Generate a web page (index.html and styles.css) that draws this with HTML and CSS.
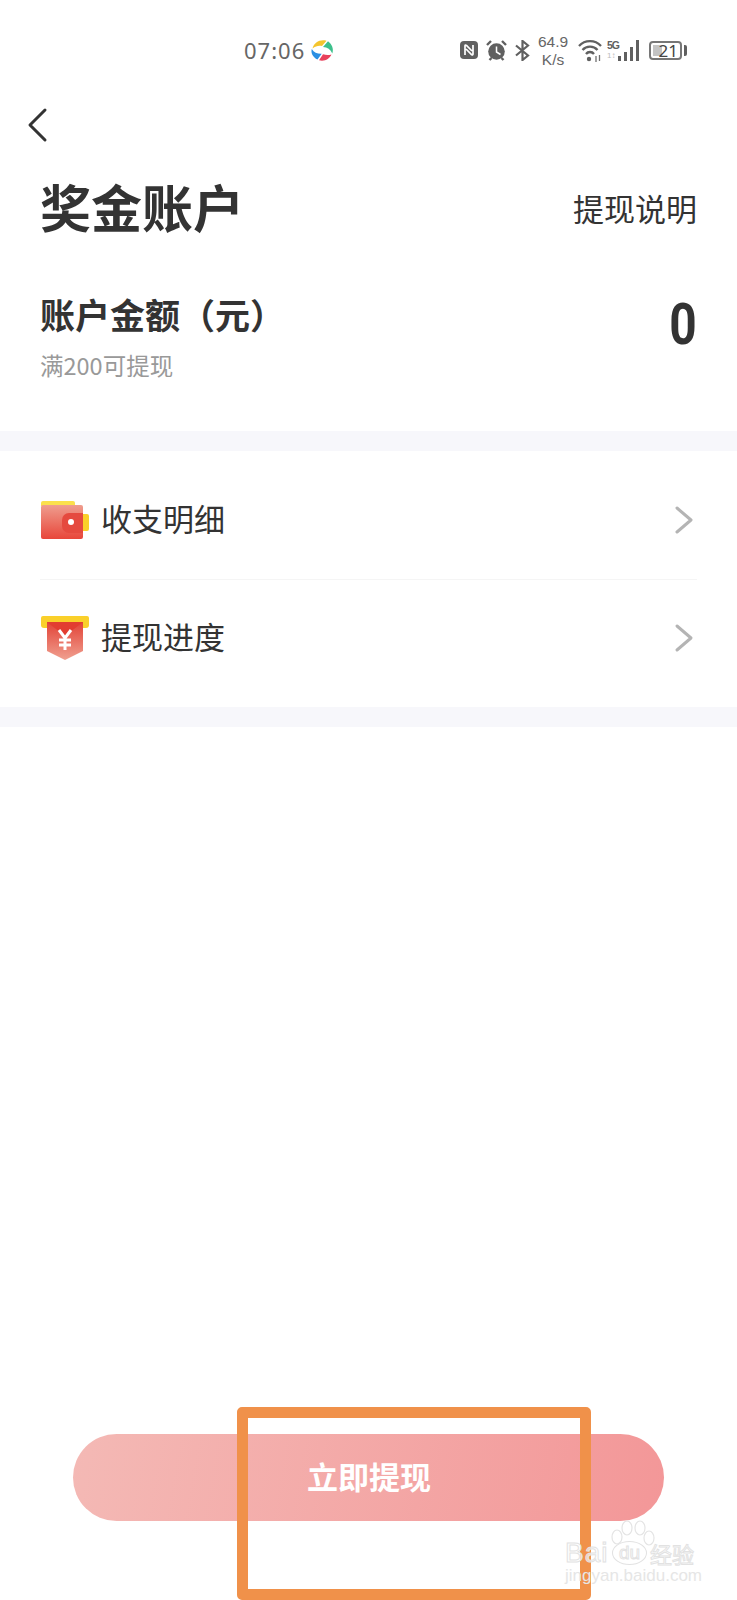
FILE: index.html
```html
<!DOCTYPE html>
<html lang="zh-CN">
<head>
    <meta charset="UTF-8">
    <title>奖金账户</title>
    <link rel="stylesheet" href="styles.css">
</head>
<body>
<div class="page">
    <div class="status">
        <div class="status-left">
            <span class="time">07:06</span>
            <svg class="app-dot" width="24" height="24" viewBox="0 0 24 24">
                <path d="M2.500 10.500C4 4.500 10 1 16.500 2.800L12 8C8.500 7.200 5.500 8.300 2.500 10.500Z" fill="#f4c52e"/>
                <path d="M18 3.200C22 6 24 11 22.300 15.500C20.500 11.500 17.500 9.300 13 9Z" fill="#3dc08c"/>
                <path d="M21.500 16.500C19.500 21 14.500 23.800 9 22.300L13 16.300C16 17.200 18.500 17.300 21.500 16.500Z" fill="#e8415c"/>
                <path d="M7.500 21.500C3 19.500 .5 15 1.800 11C4 14.500 7.500 16 11.700 15.800Z" fill="#2b8fe3"/>
            </svg>
        </div>
        <div class="status-right">
            <svg class="s-nfc" width="18" height="18" viewBox="0 0 18 18">
                <rect width="18" height="18" rx="4" fill="#606060"/>
                <path d="M5 14V5q0-1.500 1.500-.5L12 10M13 4v9q0 1.500-1.500.5L6 8" fill="none" stroke="#fff" stroke-width="1.700"/>
            </svg>
            <svg class="s-alarm" width="21" height="21" viewBox="0 0 21 21">
                <circle cx="10.500" cy="11.500" r="8.300" fill="#606060"/>
                <path d="M1 5l4-4M20 5l-4-4M3.500 20l2-2M17.500 20l-2-2" stroke="#606060" stroke-width="2.400"/>
                <path d="M10.500 6.500v5.500l4 2.500" fill="none" stroke="#fff" stroke-width="1.500"/>
            </svg>
            <svg class="s-bt" width="15" height="21" viewBox="0 0 15 21">
                <path d="M1 5.500l12 10-5.500 4.500V1l5.500 4.500-12 10" fill="none" stroke="#606060" stroke-width="2.200"/>
            </svg>
            <div class="speed">64.9<br>K/s</div>
            <svg class="s-wifi" width="24" height="23" viewBox="0 0 24 23">
                <path d="M1 7a15 15 0 0 1 22 0M4.500 11a10 10 0 0 1 15 0M8 15a5 5 0 0 1 8 0" fill="none" stroke="#606060" stroke-width="2.300"/>
                <circle cx="11" cy="20" r="2.200" fill="#606060"/>
                <path d="M18 17v6M21.500 16v6" stroke="#707070" stroke-width="1.300"/>
            </svg>
            <div class="net"><b>5G</b><i>1↕</i></div>
            <div class="bars"><span class="b1"></span><span class="b2"></span><span class="b3"></span><span class="b4"></span></div>
            <div class="battery">
                <div class="battery-body"><div class="battery-fill"></div><span>21</span></div>
                <div class="battery-cap"></div>
            </div>
        </div>
    </div>

    <div class="nav">
        <svg width="24" height="36" viewBox="0 0 24 36">
            <path d="M19 3L4 18l15 15" fill="none" stroke="#333" stroke-width="3" stroke-linecap="round" stroke-linejoin="round"/>
        </svg>
    </div>

    <div class="head">
        <h1>奖金账户</h1>
        <span class="explain">提现说明</span>
    </div>

    <div class="account">
        <div>
            <div class="account-title">账户金额（元）</div>
            <div class="account-note">满200可提现</div>
        </div>
        <div class="amount">0</div>
    </div>

    <div class="band"></div>

    <div class="menu">
        <div class="menu-row row-first">
            <svg class="menu-icon" width="48" height="38" viewBox="0 0 48 38">
                <defs>
                    <linearGradient id="redA" x1="0" y1="0" x2="0" y2="1">
                        <stop offset="0" stop-color="#ef9d8e"/>
                        <stop offset="1" stop-color="#e8463a"/>
                    </linearGradient>
                </defs>
                <path d="M0 4V2a2 2 0 0 1 2-2h30a2 2 0 0 1 2 2v3H0z" fill="#fbe04c"/>
                <path d="M40 13h6a2 2 0 0 1 2 2v13a2 2 0 0 1-2 2h-6z" fill="#fad02a"/>
                <rect y="4" width="42" height="34" rx="2" fill="url(#redA)"/>
                <path d="M42 12H28a7 7 0 0 0-7 7v6a7 7 0 0 0 7 7h14z" fill="#e54a3f"/>
                <circle cx="30" cy="21" r="3" fill="#fff"/>
            </svg>
            <span class="menu-label">收支明细</span>
            <svg class="arrow" width="20" height="30" viewBox="0 0 20 30">
                <path d="M3 3l14 12L3 27" fill="none" stroke="#b4b4b4" stroke-width="3" stroke-linecap="round" stroke-linejoin="round"/>
            </svg>
        </div>
        <div class="menu-row row-last">
            <svg class="menu-icon" width="48" height="44" viewBox="0 0 48 44">
                <defs>
                    <linearGradient id="redB" x1="0" y1="0" x2="0" y2="1">
                        <stop offset="0" stop-color="#e24236"/>
                        <stop offset="1" stop-color="#f0a090"/>
                    </linearGradient>
                </defs>
                <path d="M0 2a2 2 0 0 1 2-2h44a2 2 0 0 1 2 2v7a3 3 0 0 1-3 3H3a3 3 0 0 1-3-3z" fill="#fad02a"/>
                <path d="M6 6h36v29L24 44 6 35z" fill="url(#redB)"/>
                <path d="M6 6h36L24 20z" fill="#e23d31"/>
                <path d="M18 14l6 8 6-8M24 22v12M18 24h12M18 29h12" fill="none" stroke="#fff" stroke-width="3"/>
            </svg>
            <span class="menu-label">提现进度</span>
            <svg class="arrow" width="20" height="30" viewBox="0 0 20 30">
                <path d="M3 3l14 12L3 27" fill="none" stroke="#b4b4b4" stroke-width="3" stroke-linecap="round" stroke-linejoin="round"/>
            </svg>
        </div>
    </div>

    <div class="band"></div>

    <div class="bottom">
        <div class="withdraw">立即提现</div>
    </div>

    <div class="mark-box"></div>
    <div class="watermark">
        <svg class="wm-paw" width="46" height="28" viewBox="0 0 46 28">
            <g fill="rgba(255,255,255,.6)" stroke="#e4e4e4" stroke-width="1.200">
                <ellipse cx="7" cy="17" rx="5" ry="7"/>
                <ellipse cx="17" cy="8" rx="5" ry="7"/>
                <ellipse cx="30" cy="8" rx="5" ry="7"/>
                <ellipse cx="39" cy="18" rx="5" ry="7"/>
            </g>
        </svg>
        <div class="wm-top"><span class="wm-bai">Bai</span><span class="wm-du">du</span><span class="wm-cn">经验</span></div>
        <div class="wm-url">jingyan.baidu.com</div>
    </div>
</div>
</body>
</html>
```

FILE: styles.css
```css
*{ margin:0; padding:0; box-sizing:border-box;}
body{ background:#fff; font-family:"Noto Sans CJK SC","Noto Sans",sans-serif; color:#333;}
.page{ width:737px; height:1600px; position:relative; overflow:hidden; display:flex; flex-direction:column;}

.status{ height:107px; padding:35px 50px 0 244px; display:flex; justify-content:space-between; align-items:flex-start; flex:none;}
.status-left{ display:flex; align-items:center; gap:5px; height:30px;}
.time{ font-family:"Noto Sans",sans-serif; font-size:22px; letter-spacing:1px; color:#666;}
.status-right{ display:flex; align-items:center; height:30px; color:#606060;}
.s-alarm,.s-bt{ margin-left:8px;}
.speed{ width:30px; font-family:"Liberation Sans",sans-serif; font-size:15.5px; line-height:18px; text-align:center; margin:2px 10px 0 8px; color:#666; white-space:nowrap;}
.net{ display:flex; flex-direction:column; width:10px; margin:0 1px 0 5px;}
.net b{ font-family:"Liberation Sans",sans-serif; font-size:10.5px; line-height:11px; letter-spacing:-1px;}
.net i{ font-family:"Liberation Sans",sans-serif; font-size:8px; line-height:9px; font-style:normal; color:#bbb;}
.bars{ display:flex; align-items:flex-end; gap:3px; height:21px;}
.bars span{ width:3px; background:#606060;}
.b1{ height:5px;}
.b2{ height:9px;}
.b3{ height:14px;}
.b4{ height:21px;}
.battery{ display:flex; align-items:center; gap:2px; margin-left:10px;}
.battery-body{ width:33px; height:19px; border:2px solid #777; border-radius:4px; position:relative; display:flex; align-items:center; justify-content:flex-end; padding-right:2px;}
.battery-fill{ position:absolute; left:2px; top:2px; bottom:2px; width:9px; background:#c4c4c4;}
.battery-body span{ font-family:"Noto Sans",sans-serif; font-size:17px; line-height:15px; color:#444; position:relative;}
.battery-cap{ width:3px; height:11px; background:#606060; border-radius:0 2px 2px 0;}

.nav{ height:36px; padding-left:26px; flex:none; display:flex;}

.head{ display:flex; justify-content:space-between; align-items:center; padding:0 40px; height:72px; margin-top:27px; flex:none;}
.head h1{ font-size:51px; font-weight:700; line-height:72px; color:#333;}
.explain{ font-size:31px; line-height:72px; padding-top:4px; color:#333;}

.account{ display:flex; justify-content:space-between; align-items:flex-start; padding:0 40px; margin-top:48px; height:141px; flex:none;}
.account-title{ font-size:35px; line-height:48px; font-weight:700; color:#333;}
.account-note{ font-size:23.5px; line-height:32px; color:#999; margin-top:11px;}
.amount{ font-family:"Roboto",sans-serif; font-size:57px; font-weight:700; line-height:66px; margin-top:2px; color:#333; transform:scaleX(.84); transform-origin:right center;}

.band{ height:20px; background:#f7f7fb; flex:none;}

.menu{ padding:0 40px; flex:none;}
.menu-row{ display:flex; align-items:center; padding-right:3px;}
.row-first{ height:129px; padding-top:10px; border-bottom:1px solid #f5f5f5;}
.row-last{ height:127px; padding-bottom:11px;}
.menu-icon{ flex:none; margin:0 12px 0 1px;}
.menu-label{ font-size:31px; line-height:44px; flex:1; margin-bottom:4px; color:#333;}
.arrow{ flex:none;}

.bottom{ margin-top:auto; padding:0 73px 79px 73px; flex:none;}
.withdraw{ height:87px; border-radius:44px; background:linear-gradient(100deg,#f4b9b5 0%,#f39798 100%); color:#fff; font-size:31px; font-weight:700; line-height:83px; padding-left:234px;}

.mark-box{ position:absolute; left:237px; top:1407px; width:354px; height:193px; border:11px solid #f0914a; border-radius:5px;}

.watermark{ position:absolute; left:565px; top:1520px; width:136px;}
.wm-paw{ position:absolute; left:45px; top:0;}
.wm-top{ display:flex; align-items:center; height:24px; margin-top:21px; color:rgba(255,255,255,.65); -webkit-text-stroke:1px #e2e2e2;}
.wm-bai{ font-family:"Liberation Sans",sans-serif; font-size:28px; line-height:24px; width:47px; letter-spacing:1px;}
.wm-du{ font-family:"Liberation Sans",sans-serif; font-size:19px; line-height:22px; width:35px; text-align:center; border:1px solid #e2e2e2; border-radius:50%;}
.wm-cn{ font-size:22px; line-height:24px; margin-left:3px; white-space:nowrap;}
.wm-url{ font-family:"Liberation Sans",sans-serif; font-size:17px; line-height:18px; margin-top:2px; color:#e6e6e6; white-space:nowrap;}
```
